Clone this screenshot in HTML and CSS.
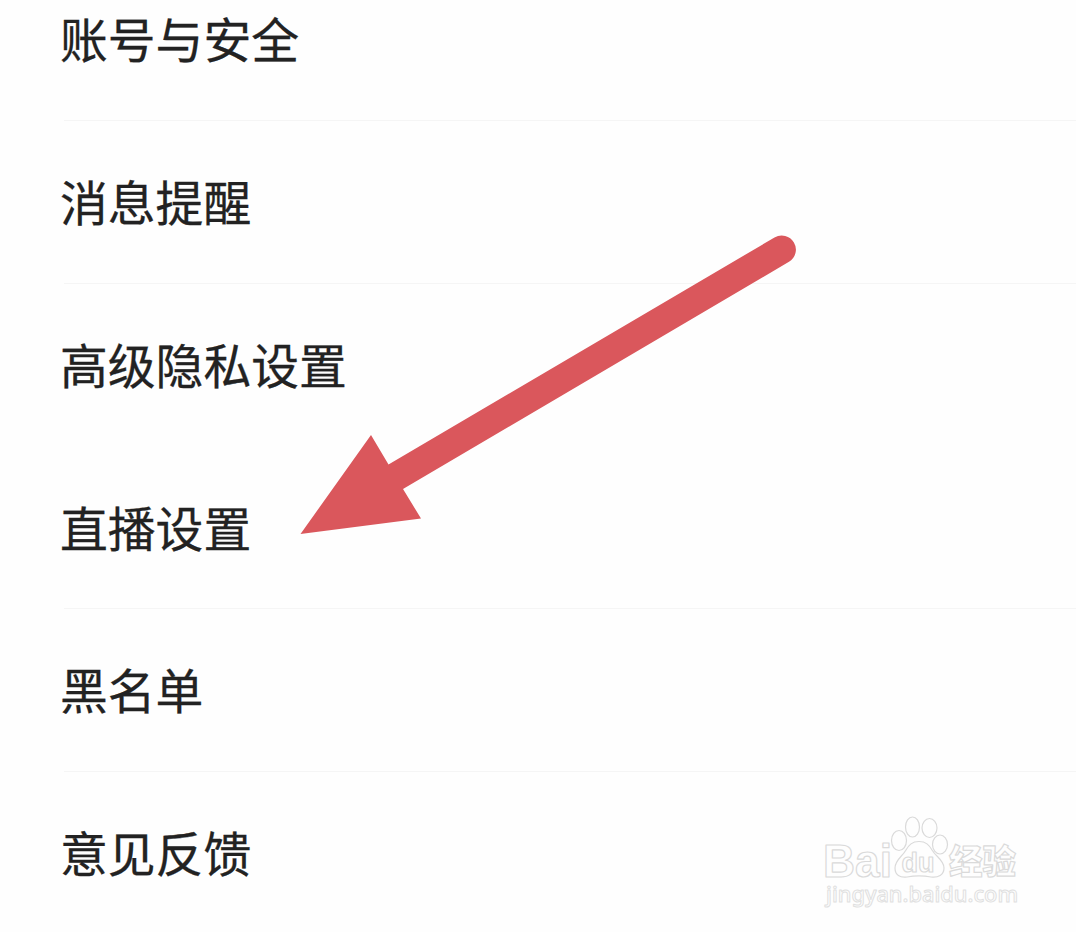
FILE: index.html
```html
<!DOCTYPE html>
<html lang="zh-CN">
<head>
    <meta charset="UTF-8">
    <meta name="viewport" content="width=device-width, initial-scale=1.0">
    <title>设置</title>
    <link rel="stylesheet" href="styles.css">
</head>
<body>
    <ul class="settings-list">
        <li class="settings-item">账号与安全</li>
        <li class="settings-item">消息提醒</li>
        <li class="settings-item no-border">高级隐私设置</li>
        <li class="settings-item">直播设置</li>
        <li class="settings-item">黑名单</li>
        <li class="settings-item no-border">意见反馈</li>
    </ul>

    <svg class="arrow" width="500" height="304" viewBox="299 233 500 304">
        <path d="M300.500 534 L371 435 L388.500 464.500 L774.500 237.500 A14 14 0 0 1 789 261.800 L403 489 L421 518.500 Z"/>
    </svg>

    <svg class="watermark" width="220" height="115" viewBox="810 805 220 115">
        <text class="brand" x="823" y="876.500" textLength="69" lengthAdjust="spacingAndGlyphs">Bai</text>
        <ellipse cx="899" cy="840.500" rx="7.500" ry="10"/>
        <ellipse cx="912.500" cy="827" rx="7" ry="10"/>
        <ellipse cx="929.500" cy="828" rx="7.500" ry="9.500"/>
        <ellipse cx="940" cy="844.500" rx="7.500" ry="9.500"/>
        <path d="M919 841.500 C926 841.500 929 845 932 850 C936 857 944 860 944 868 C944 875 938 878 931 877 C923 875.500 915 875.500 907 877 C900 878 895 875 895 868 C895 860 902 857 906 850 C909 845 912 841.500 919 841.500 Z"/>
        <text class="du" x="901.500" y="872" textLength="33" lengthAdjust="spacingAndGlyphs">du</text>
        <text class="name" x="949" y="873.500" textLength="67" lengthAdjust="spacingAndGlyphs">经验</text>
        <text class="site" x="826" y="902" textLength="192" lengthAdjust="spacingAndGlyphs">jingyan.baidu.com</text>
    </svg>
</body>
</html>
```
FILE: styles.css
```css
body {
    position: relative;
    height: 932px;
    margin: 0;
    overflow: hidden;
    background: #fefefe;
    color: #222;
    font-family: "Noto Sans CJK SC", sans-serif;
}
.settings-list {
    list-style: none;
    margin: -42px 0 0;
    padding: 0 0 0 60px;
}
.settings-item {
    display: flex;
    align-items: center;
    box-sizing: border-box;
    height: 162.75px;
    padding-bottom: 2px;
    font-size: 47.8px;
    line-height: 1;
    -webkit-text-stroke: 0.3px #222;
    background: linear-gradient(#f5f5f5, #f5f5f5) 4px 100% / 100% 1px no-repeat;
}
.settings-item.no-border {
    background: none;
}
.arrow {
    position: absolute;
    left: 299px;
    top: 233px;
    fill: #da575c;
}
.watermark {
    position: absolute;
    left: 810px;
    top: 805px;
    fill: #fefefe;
    stroke: #dadada;
    stroke-width: 1.2px;
    stroke-linejoin: round;
}
.brand {
    font: bold 46px "Liberation Sans", sans-serif;
}
.du {
    font: bold 28px "Liberation Sans", sans-serif;
}
.name {
    font: 900 34px/1 "Noto Sans CJK SC", sans-serif;
}
.site {
    font: 500 22px/1 "Noto Sans", sans-serif;
    stroke: #e0e0e0;
    stroke-width: 1px;
}
```
